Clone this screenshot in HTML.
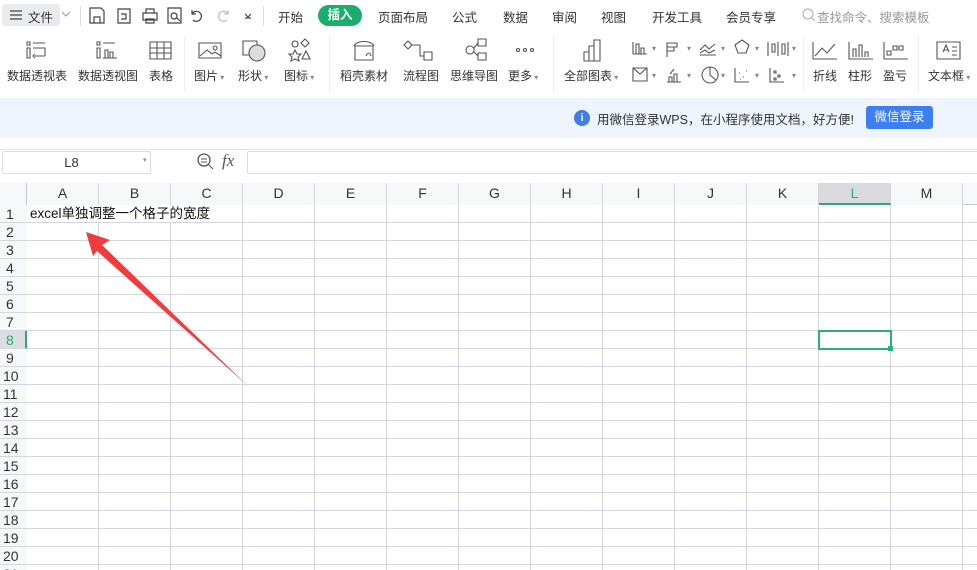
<!DOCTYPE html>
<html><head><meta charset="utf-8"><style>
*{margin:0;padding:0;box-sizing:border-box}
html,body{width:977px;height:570px;overflow:hidden}
body{background:#fff;font-family:"Liberation Sans","Noto Sans CJK SC",sans-serif;color:#333;position:relative}
.a{position:absolute;white-space:nowrap}
.t{font-size:12.5px;color:#333}
.lab{font-size:12px;color:#333}
.ic{position:absolute}
.dd{position:absolute;font-size:8px;color:#888}
.grid{position:absolute;left:27px;top:205px;width:950px;height:365px;
background-image:repeating-linear-gradient(to right,transparent 0 71px,#d5d6de 71px 72px),repeating-linear-gradient(to bottom,transparent 0 17px,#d5d6de 17px 18px)}
.rh{position:absolute;left:0;width:27px;height:18px;font-size:14px;color:#333;padding-left:6px;line-height:18px;border-bottom:1px solid #d5d6de;background:#f7f8fa}
.ch{position:absolute;top:183px;height:22px;width:72px;text-align:center;font-size:14px;line-height:20px;color:#333;border-right:1px solid #d5d6de;background:#f7f8fa}
</style></head><body>
<div class="a" style="left:2px;top:4px;width:58px;height:22px;background:#e9ebef;border-radius:3px"></div>
<svg class="ic" style="left:9px;top:9px" width="14" height="12"><path d="M1 2h12M1 6h12M1 10h12" stroke="#444" stroke-width="1.2"/></svg>
<div class="a t" style="left:28px;top:7px">文件</div>
<svg class="ic" style="left:61px;top:11px" width="10" height="7"><path d="M1 1l4 4 4-4" stroke="#999" fill="none"/></svg>
<div class="a" style="left:80px;top:6px;width:1px;height:20px;background:#ddd"></div>
<svg class="ic" style="left:88px;top:6px" width="170" height="20" fill="none" stroke="#444" stroke-width="1.2">
<path d="M2 2h11l3 3v12H2z M6 17v-6h6v6"/>
<path d="M30 3h12v14H30z M33 8h5v5h-5"/>
<path d="M55 7h14v7H55z M58 7V3h8v4 M58 13h8v4h-8z"/>
<path d="M80 2h13v15H80z M86 7a3 3 0 1 0 .1 0 M89 12l3 3"/>
<path d="M104 8a5 5 0 1 1 1 6 M104 4v4h4"/>
<path d="M140 8a5 5 0 1 0-1 6 M140 4v4h-4" stroke="#bbb"/>
<path d="M157 8l3 3 3-3 M157 12h6"/>
</svg>
<div class="a" style="left:263px;top:6px;width:1px;height:20px;background:#ddd"></div>
<div class="a t" style="left:278px;top:7px">开始</div>
<div class="a" style="left:318px;top:5px;width:44px;height:21px;background:#1aad6d;border-radius:11px;color:#fff;font-size:12.5px;text-align:center;line-height:21px;font-weight:bold">插入</div>
<div class="a t" style="left:378px;top:7px">页面布局</div>
<div class="a t" style="left:452px;top:7px">公式</div>
<div class="a t" style="left:503px;top:7px">数据</div>
<div class="a t" style="left:552px;top:7px">审阅</div>
<div class="a t" style="left:601px;top:7px">视图</div>
<div class="a t" style="left:652px;top:7px">开发工具</div>
<div class="a t" style="left:726px;top:7px">会员专享</div>
<svg class="ic" style="left:802px;top:8px" width="14" height="14"><circle cx="6" cy="6" r="5" stroke="#aaa" fill="none"/><path d="M10 10l3 3" stroke="#aaa"/></svg>
<div class="a t" style="left:817px;top:7px;color:#999">查找命令、搜索模板</div>
<svg class="ic" style="left:0;top:38px" width="977" height="26" fill="none" stroke="#555" stroke-width="1.1">
<path d="M27 4h3v3h-3z M33 5h12 M27 10h3v10h-3z M33 10h12v8 M35 18h10 M35 16l-2 2 2 2"/>
<path d="M97 4h3v3h-3z M103 5h12 M97 10h3v10h-3z M105 20V12h3v8 M110 20v-6h3v6 M103 20h14"/>
<path d="M150 4h21v17h-21z M150 10h21 M150 15h21 M157 4v17 M164 4v17"/>
<path d="M199 5h22v15h-22z M200 18l7-6 5 4 3-2 6 4 M215 8a2 2 0 1 0 .1 0"/>
<path d="M243 3h14v14h-14z" /><circle cx="257" cy="15" r="8" fill="#ddd"/>
<path d="M295 3a3 3 0 1 0 .1 0 M305 1l4 4-4 4-4-4z M295 12l2 4h4l-3 3 1 4-4-2-4 2 1-4-3-3h4z M306 13l4 8h-8z"/>
<path d="M355 8h18v14h-18z M354 8c2-6 18-6 20 0 M366 18c2-4 4-4 5 0"/>
<path d="M408 3l4 4-4 4-4-4z M412 7h8v4 M424 14h8v8h-8z M420 11v7h4"/>
<path d="M470 8a4 4 0 1 0 .1 0 M474 10l4-5 M474 14l4 4 M478 1h8v7h-8z M478 15h8v7h-8z"/>
<circle cx="518" cy="12" r="1.5"/><circle cx="525" cy="12" r="1.5"/><circle cx="532" cy="12" r="1.5"/>
<path d="M584 14h5v9h-5z M589 8h5v15h-5z M594 2h6v21h-6z"/>
<path d="M633 4v12 M633 16h14 M636 6h3v10h-3z M641 10h3v6h-3z"/>
<path d="M667 5h10v4h-10z M667 9h7v4h-7z M667 5v14"/>
<path d="M700 12l5-5 4 4 6-5 M700 15l5-3 4 3 6-3 M700 17h16"/>
<path d="M742 2l7 5-3 8h-8l-3-8z"/>
<path d="M768 4v14 M772 6h3v8h-3z M778 4v14 M782 6h3v10h-3z M788 4v14"/>
<path d="M813 4v17h24 M815 18l7-8 5 5 8-9"/>
<path d="M849 4v17h24 M853 19v-8h3v8 M859 19v-12h3v12 M865 19v-5h3v5"/>
<path d="M884 4v17h24 M887 13h4v4h-4z M893 8h4v4h-4z M899 8h4v4h-4z"/>
<path d="M937 4h23v17h-23z M943 14l3-7 3 7 M944 12h4 M952 9h5 M952 13h5 M952 17h5"/>
</svg>
<div class="dd" style="left:652px;top:44px">▾</div><div class="dd" style="left:687px;top:44px">▾</div><div class="dd" style="left:721px;top:44px">▾</div><div class="dd" style="left:755px;top:44px">▾</div><div class="dd" style="left:792px;top:44px">▾</div>
<svg class="ic" style="left:630px;top:65px" width="170" height="20" fill="none" stroke="#555" stroke-width="1.1">
<path d="M3 3h14v13H3z M3 3l7 6 7-6"/>
<path d="M37 17h14 M39 17v-5h3v5 M44 17v-8h3v8 M40 9l4-5"/>
<path d="M80 2a8 8 0 1 0 .1 0 M80 2v8l6 5" />
<path d="M105 3v14h14 M109 8h1 M113 12h1 M110 14h1 M116 6h1"/>
<path d="M140 3v14h14 M144 6h2v2h-2z M148 10h2v2h-2z M144 13h2v2h-2z"/>
</svg>
<div class="dd" style="left:652px;top:71px">▾</div><div class="dd" style="left:687px;top:71px">▾</div><div class="dd" style="left:721px;top:71px">▾</div><div class="dd" style="left:755px;top:71px">▾</div><div class="dd" style="left:792px;top:71px">▾</div>
<div class="a lab" style="left:7px;top:67px">数据透视表</div>
<div class="a lab" style="left:78px;top:67px">数据透视图</div>
<div class="a lab" style="left:149px;top:67px">表格</div>
<div class="a" style="left:184px;top:36px;width:1px;height:56px;background:#eee"></div>
<div class="a lab" style="left:194px;top:67px">图片<span style="font-size:8px;color:#888"> ▾</span></div>
<div class="a lab" style="left:238px;top:67px">形状<span style="font-size:8px;color:#888"> ▾</span></div>
<div class="a lab" style="left:284px;top:67px">图标<span style="font-size:8px;color:#888"> ▾</span></div>
<div class="a" style="left:329px;top:36px;width:1px;height:56px;background:#eee"></div>
<div class="a lab" style="left:340px;top:67px">稻壳素材</div>
<div class="a lab" style="left:403px;top:67px">流程图</div>
<div class="a lab" style="left:450px;top:67px">思维导图</div>
<div class="a lab" style="left:508px;top:67px">更多<span style="font-size:8px;color:#888"> ▾</span></div>
<div class="a" style="left:553px;top:36px;width:1px;height:56px;background:#eee"></div>
<div class="a lab" style="left:564px;top:67px">全部图表<span style="font-size:8px;color:#888"> ▾</span></div>
<div class="a" style="left:803px;top:36px;width:1px;height:56px;background:#eee"></div>
<div class="a lab" style="left:813px;top:67px">折线</div>
<div class="a lab" style="left:848px;top:67px">柱形</div>
<div class="a lab" style="left:883px;top:67px">盈亏</div>
<div class="a" style="left:918px;top:36px;width:1px;height:56px;background:#eee"></div>
<div class="a lab" style="left:928px;top:67px">文本框<span style="font-size:8px;color:#888"> ▾</span></div>
<div class="a" style="left:0;top:98px;width:977px;height:40px;background:#eef3fc"></div>
<div class="a" style="left:574px;top:110px;width:16px;height:16px;border-radius:50%;background:#3f7ee8;color:#fff;font-size:11px;text-align:center;line-height:16px;font-weight:bold">i</div>
<div class="a" style="left:597px;top:109px;font-size:12.5px;color:#333">用微信登录WPS，在小程序使用文档，好方便!</div>
<div class="a" style="left:866px;top:106px;width:67px;height:23px;background:#3d7ff0;border-radius:3px;color:#fff;font-size:12.5px;text-align:center;line-height:23px">微信登录</div>
<div class="a" style="left:0;top:149px;width:977px;height:1px;background:#e3e3e3"></div>
<div class="a" style="left:2px;top:151px;width:149px;height:23px;border:1px solid #ddd;border-radius:2px;font-size:13px;text-align:center;line-height:21px;padding-right:10px">L8</div>
<div class="a" style="left:143px;top:156px;font-size:7px;color:#888">▾</div>
<svg class="ic" style="left:196px;top:152px" width="20" height="20" fill="none" stroke="#555" stroke-width="1.3"><circle cx="8" cy="8" r="6"/><path d="M12 12l5 5 M5 7h6 M5 10h6" stroke-width="1"/></svg>
<div class="a" style="left:222px;top:151px;font-family:'Liberation Serif',serif;font-style:italic;font-size:17px;color:#555">fx</div>
<div class="a" style="left:247px;top:151px;width:740px;height:23px;border:1px solid #ddd;border-radius:2px"></div>
<div class="a" style="left:0;top:183px;width:977px;height:22px;background:#f7f8fa;border-bottom:1px solid #c8c9cf"></div>
<svg class="ic" style="left:10px;top:189px" width="14" height="12"><path d="M13 0v12H1z" fill="#c4c4c4"/></svg>
<div class="a" style="left:0;top:183px;width:27px;height:387px;background:#f7f8fa;border-right:1px solid #c8c9cf"></div>
<div class="ch" style="left:27px">A</div><div class="ch" style="left:99px">B</div><div class="ch" style="left:171px">C</div><div class="ch" style="left:243px">D</div><div class="ch" style="left:315px">E</div><div class="ch" style="left:387px">F</div><div class="ch" style="left:459px">G</div><div class="ch" style="left:531px">H</div><div class="ch" style="left:603px">I</div><div class="ch" style="left:675px">J</div><div class="ch" style="left:747px">K</div><div class="ch" style="left:819px;background:#d9dadf;color:#2fa977;border-bottom:2px solid #2fa977">L</div><div class="ch" style="left:891px">M</div>
<div class="grid"></div>
<div class="rh" style="top:205px">1</div><div class="rh" style="top:223px">2</div><div class="rh" style="top:241px">3</div><div class="rh" style="top:259px">4</div><div class="rh" style="top:277px">5</div><div class="rh" style="top:295px">6</div><div class="rh" style="top:313px">7</div><div class="rh" style="top:331px;background:#dcdde2;color:#2fa977;border-right:2px solid #2fa977">8</div><div class="rh" style="top:349px">9</div><div class="rh" style="top:367px;padding-left:3px">10</div><div class="rh" style="top:385px;padding-left:3px">11</div><div class="rh" style="top:403px;padding-left:3px">12</div><div class="rh" style="top:421px;padding-left:3px">13</div><div class="rh" style="top:439px;padding-left:3px">14</div><div class="rh" style="top:457px;padding-left:3px">15</div><div class="rh" style="top:475px;padding-left:3px">16</div><div class="rh" style="top:493px;padding-left:3px">17</div><div class="rh" style="top:511px;padding-left:3px">18</div><div class="rh" style="top:529px;padding-left:3px">19</div><div class="rh" style="top:547px;padding-left:3px">20</div><div class="rh" style="top:565px;padding-left:3px">21</div>
<div class="a" style="left:30px;top:205px;font-size:13.5px;color:#111;background:#fff;line-height:17px;padding-right:2px">excel单独调整一个格子的宽度</div>
<div class="a" style="left:818px;top:330px;width:74px;height:20px;border:2px solid #2bb07a"></div>
<div class="a" style="left:888px;top:346px;width:5px;height:5px;background:#2bb07a"></div>
<svg class="ic" style="left:0;top:0" width="977" height="570"><path d="M86 232 L110 240 L102 245 L248 386 L97 251 L93 256 Z" fill="#f03c3c"/></svg>
</body></html>
